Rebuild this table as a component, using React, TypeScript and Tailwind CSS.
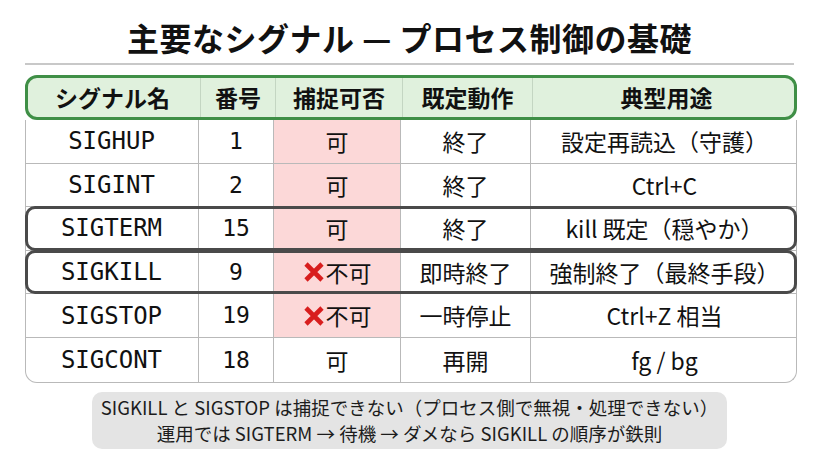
import React from "react";

type Row = {
  name: string;
  num: string;
  catchable: boolean;
  pink: boolean;
  action: string;
  use: string;
  boxed?: boolean;
};

const ROWS: Row[] = [
  { name: "SIGHUP", num: "1", catchable: true, pink: true, action: "終了", use: "設定再読込（守護）" },
  { name: "SIGINT", num: "2", catchable: true, pink: true, action: "終了", use: "Ctrl+C" },
  { name: "SIGTERM", num: "15", catchable: true, pink: true, action: "終了", use: "kill 既定（穏やか）", boxed: true },
  { name: "SIGKILL", num: "9", catchable: false, pink: true, action: "即時終了", use: "強制終了（最終手段）", boxed: true },
  { name: "SIGSTOP", num: "19", catchable: false, pink: true, action: "一時停止", use: "Ctrl+Z 相当" },
  { name: "SIGCONT", num: "18", catchable: true, pink: false, action: "再開", use: "fg / bg" },
];

const HEADERS = ["シグナル名", "番号", "捕捉可否", "既定動作", "典型用途"];

const jp = "font-['Noto_Sans_CJK_JP','Noto_Sans',sans-serif]";
const mono = "font-['DejaVu_Sans_Mono','Noto_Sans_CJK_JP',monospace]";
const cols = "grid grid-cols-[173px_75px_127px_130px_267px]";

function Cross() {
  return (
    <svg width="22" height="22" viewBox="0 0 22 22" className="mr-[1px]">
      <path d="M3 3 L19 19 M19 3 L3 19" stroke="#d81e1e" strokeWidth="4.6" strokeLinecap="butt" />
    </svg>
  );
}

export default function App() {
  return (
    <div className={`w-[819px] h-[457px] bg-white text-[#111] ${jp} overflow-hidden`}>
      {/* Title */}
      <h1 className="pt-[17px] h-[46px] text-center text-[32px] leading-[40px] font-bold tracking-[0.5px]">
        主要なシグナル — プロセス制御の基礎
      </h1>
      <div className="mx-[25px] mt-[17px] h-[2px] bg-[#c8c8c8]" />

      {/* Table */}
      <div className="ml-[25px] mt-[10px] w-[772px]">
        <div className={`${cols} h-[45px] border-[3px] border-[#3f8f46] bg-[#e0f1dd] rounded-[12px] text-[23px] font-bold`}>
          {HEADERS.map((h, i) => (
            <div
              key={h}
              className={`flex items-center justify-center ${i < 4 ? "border-r border-[#c4d6c2]" : ""} ${i === 0 ? "-ml-[3px]" : ""}`}
            >
              {h}
            </div>
          ))}
        </div>

        <div className="border-x border-b border-[#b9b9b9] rounded-b-[12px]">
          {ROWS.map((r, idx) => (
            <div
              key={r.name}
              className={`relative ${cols} h-[43.6px] ${idx < ROWS.length - 1 ? "border-b border-[#b9b9b9]" : ""} text-[23px]`}
            >
              <div className={`flex items-center justify-center border-r border-[#b9b9b9] ${mono} text-[24px] -ml-[1px]`}>
                {r.name}
              </div>
              <div className={`flex items-center justify-center border-r border-[#b9b9b9] ${mono} text-[23px]`}>
                {r.num}
              </div>
              <div className={`flex items-center justify-center border-r border-[#b9b9b9] ${r.pink ? "bg-[#fcd8d8]" : ""}`}>
                {!r.catchable && <Cross />}
                {r.catchable ? "可" : "不可"}
              </div>
              <div className="flex items-center justify-center border-r border-[#b9b9b9]">{r.action}</div>
              <div className="flex items-center justify-center">{r.use}</div>
              {r.boxed && (
                <div className="pointer-events-none absolute -inset-x-[1px] -top-[1px] -bottom-[1px] border-[3px] border-[#4a4a4a] rounded-[10px]" />
              )}
            </div>
          ))}
        </div>
      </div>

      {/* Note */}
      <div className="ml-[92px] mt-[9px] w-[635px] h-[57px] rounded-[10px] bg-[#e4e4e4] flex flex-col items-center justify-center text-[18.5px] leading-[26px] text-[#1c1c1c]">
        <div>SIGKILL と SIGSTOP は捕捉できない（プロセス側で無視・処理できない）</div>
        <div>運用では SIGTERM → 待機 → ダメなら SIGKILL の順序が鉄則</div>
      </div>
    </div>
  );
}
